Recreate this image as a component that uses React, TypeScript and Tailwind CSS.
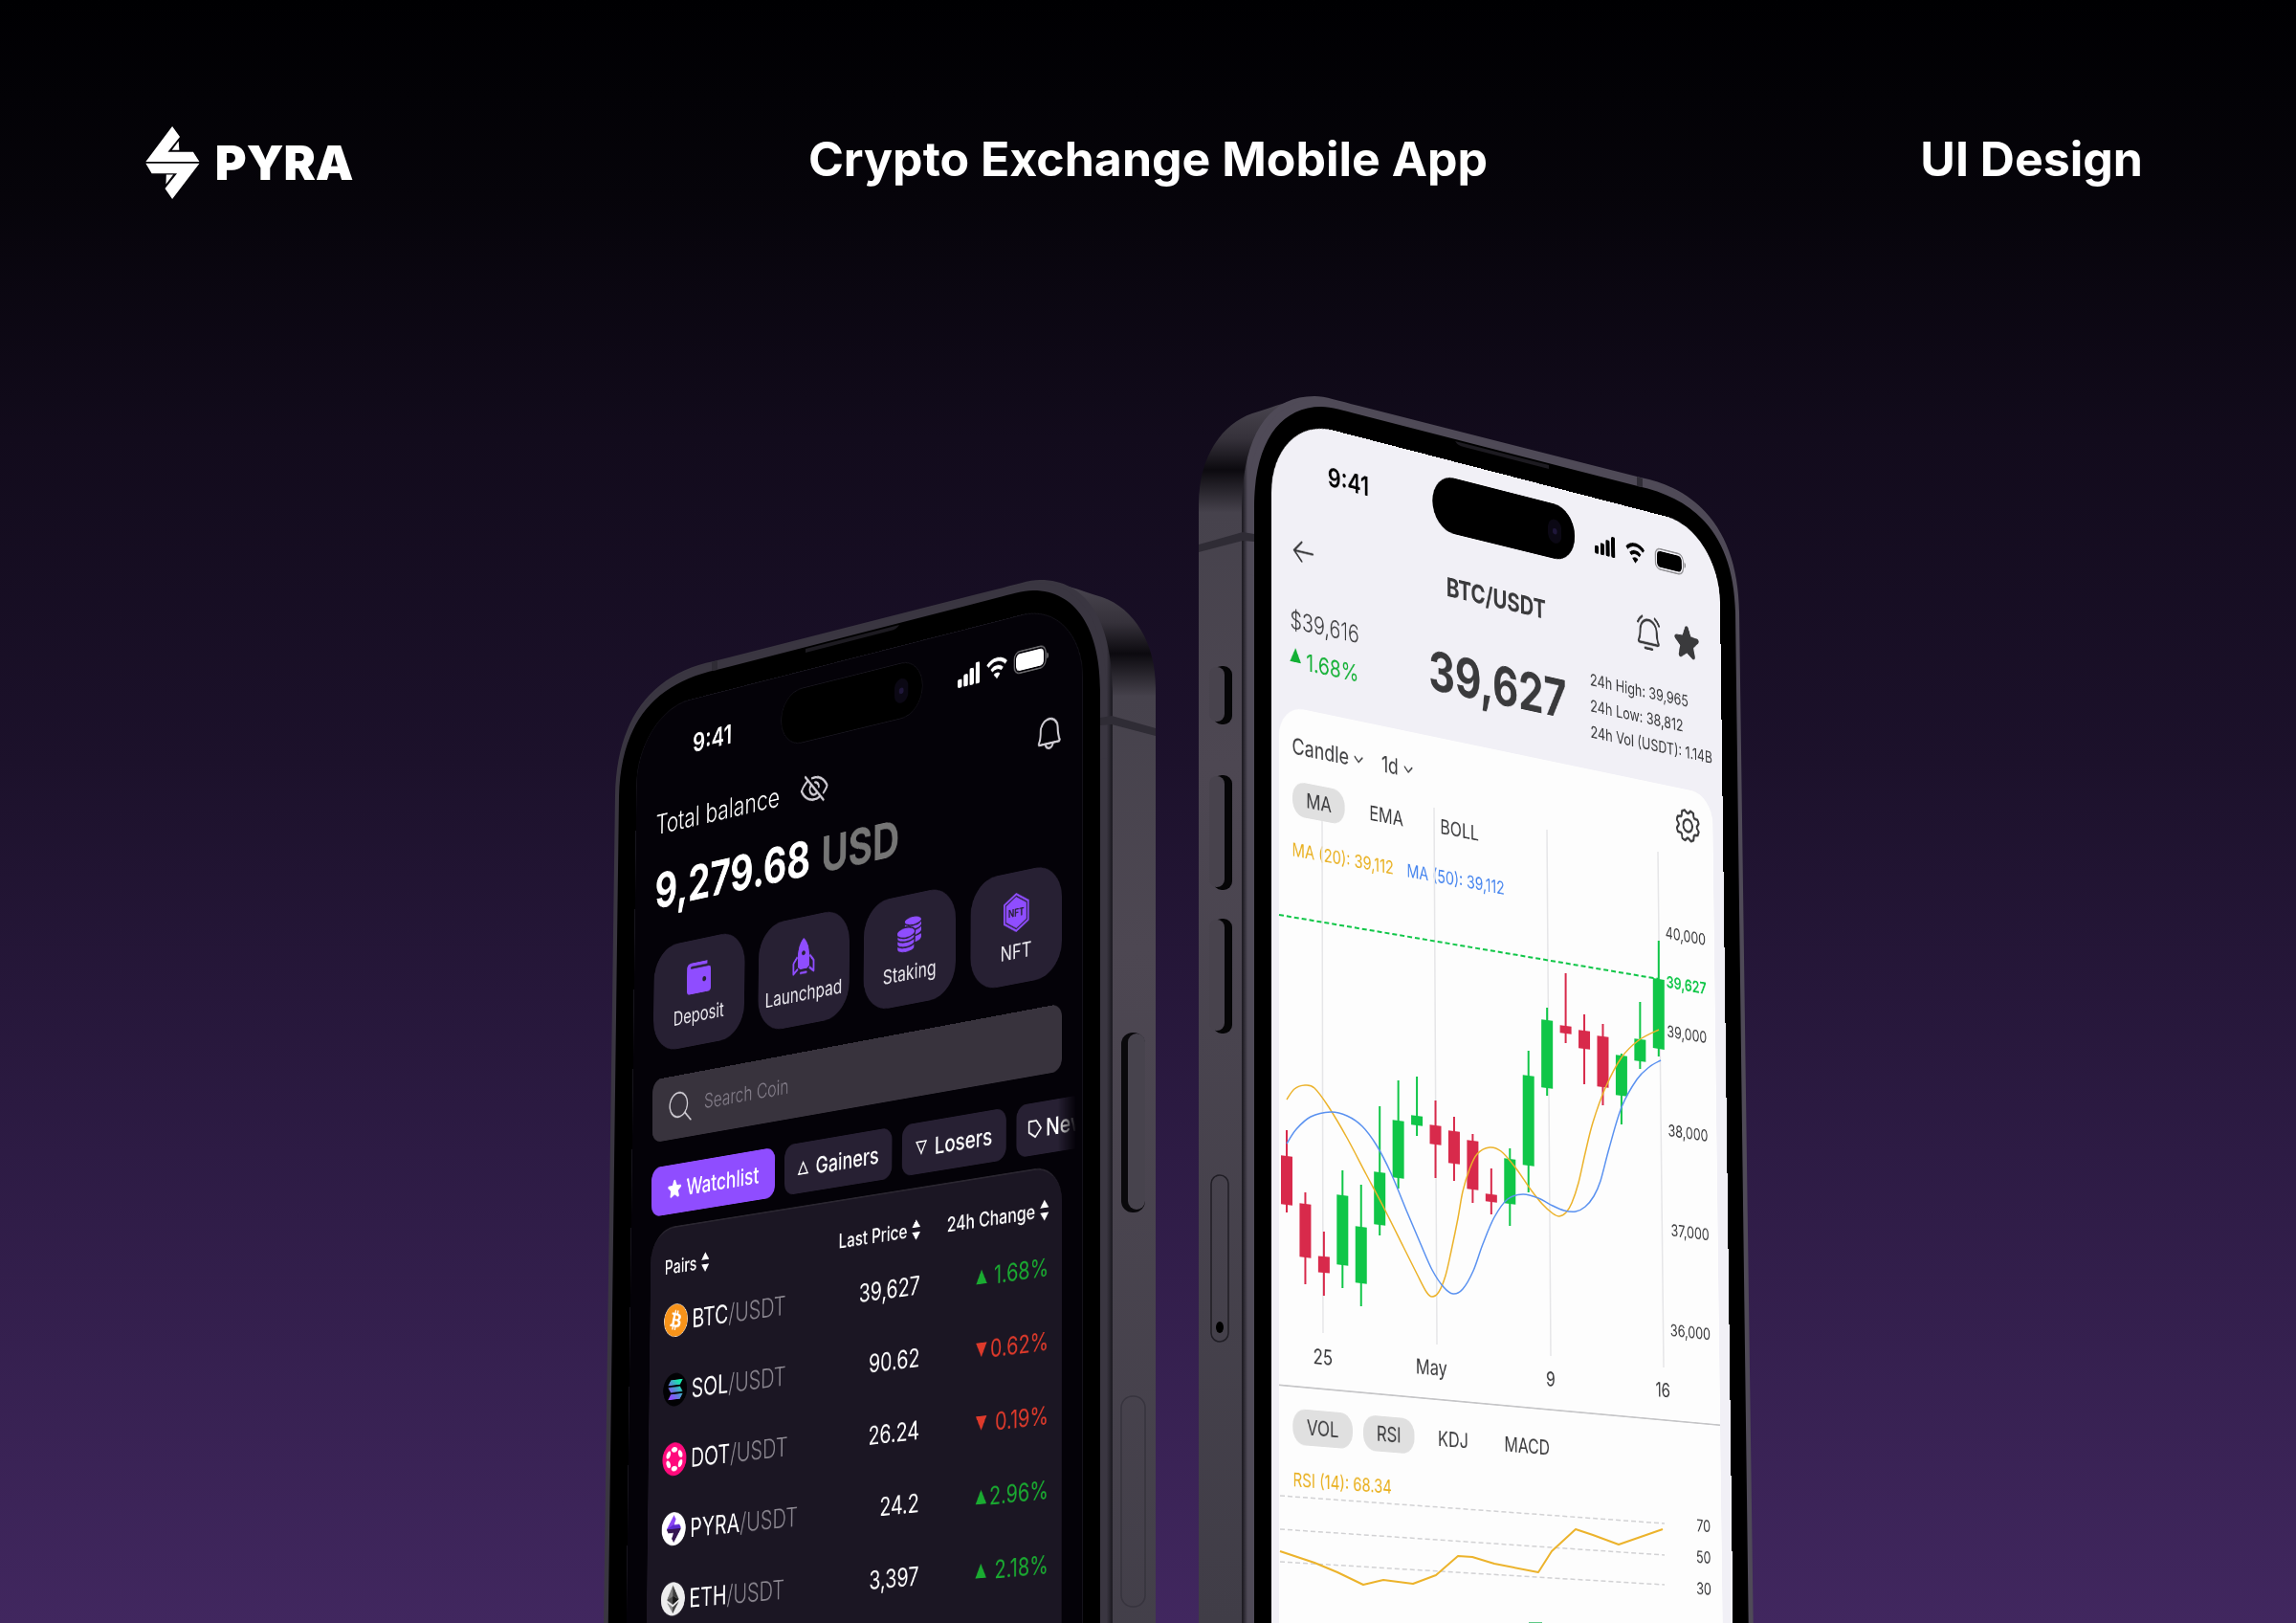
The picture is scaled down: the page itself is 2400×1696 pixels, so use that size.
import { useId, type ReactNode } from "react";
import {
  PiArrowLeft,
  PiBell,
  PiBellSimpleRinging,
  PiCaretDownBold,
  PiEyeSlash,
  PiGear,
  PiMagnifyingGlassLight,
  PiStarFill,
} from "react-icons/pi";
import { FaBitcoin } from "react-icons/fa6";

type Point = [number, number];

const STAGE_X = 560;
const STAGE_Y = 380;
const SCREEN_W = 786;
const SCREEN_H = 1704;

/** matrix3d that lays a flat SCREEN_W x SCREEN_H screen onto four stage points (clockwise from top left). */
function projectOnto(corners: Point[]) {
  const [[x0, y0], [x1, y1], [x2, y2], [x3, y3]] = corners.map(([x, y]) => [x - STAGE_X, y - STAGE_Y]);
  const dx1 = x1 - x2, dx2 = x3 - x2, dx3 = x0 - x1 + x2 - x3;
  const dy1 = y1 - y2, dy2 = y3 - y2, dy3 = y0 - y1 + y2 - y3;
  const det = dx1 * dy2 - dx2 * dy1;
  const g = (dx3 * dy2 - dx2 * dy3) / det;
  const h = (dx1 * dy3 - dx3 * dy1) / det;
  const a = x1 - x0 + g * x1, b = x3 - x0 + h * x3;
  const d = y1 - y0 + g * y1, e = y3 - y0 + h * y3;
  const m = [
    a / SCREEN_W, d / SCREEN_W, 0, g / SCREEN_W,
    b / SCREEN_H, e / SCREEN_H, 0, h / SCREEN_H,
    0, 0, 1, 0,
    x0, y0, 0, 1,
  ];
  return `matrix3d(${m.join(",")})`;
}

const LIGHT_CORNERS: Point[] = [[1329, 433], [1797, 554], [1814, 1882], [1329, 1872]];
const DARK_CORNERS: Point[] = [[666, 745], [1132, 626], [1132, 2064], [650, 2074]];

/* ---------- icons ---------- */

function PyraMark({ className }: { className?: string }) {
  return (
    <svg viewBox="36 35 172 230" className={className} fill="currentColor" aria-hidden="true">
      <path d="M121 35 145 68 107 116H187L207 147H37ZM141 82 143 110H120Z" />
      <path d="M37 152H207L121 265 98 232 136 184H56ZM102 188H124L101 218Z" />
    </svg>
  );
}

function StatusIcons({ className }: { className: string }) {
  return (
    <div className={className}>
      <svg viewBox="0 0 38 28" className="w-[38px]" fill="currentColor" aria-hidden="true">
        <rect x="0" y="17" width="7" height="11" rx="2" />
        <rect x="10" y="12" width="7" height="16" rx="2" />
        <rect x="20" y="6" width="7" height="22" rx="2" />
        <rect x="30" y="0" width="7" height="28" rx="2" />
      </svg>
      <svg viewBox="0 0 36 28" className="w-9" fill="none" stroke="currentColor" strokeWidth="5" aria-hidden="true">
        <path d="M2.500 9.500a22 22 0 0 1 31 0" />
        <path d="M9 16.500a13 13 0 0 1 18 0" />
        <path d="M18 28l-5.500-6a8.500 8.500 0 0 1 11 0z" fill="currentColor" stroke="none" />
      </svg>
      <svg viewBox="0 0 58 30" className="w-[58px]" aria-hidden="true">
        <rect x="1" y="1" width="52" height="28" rx="9" fill="none" stroke="currentColor" strokeOpacity=".4" strokeWidth="2" />
        <rect x="4" y="4" width="46" height="22" rx="6" fill="currentColor" />
        <path d="M55 11q3 1 3 4t-3 4z" fill="currentColor" fillOpacity=".4" />
      </svg>
    </div>
  );
}

function WalletIcon() {
  return (
    <svg viewBox="0 0 40 40" className="size-11" aria-hidden="true">
      <path fill="#8f4dff" d="M7 1H34V5H8q-2 0-2 1.500T8 8H36q4 0 4 4V35q0 4-4 4H4q-4 0-4-4V7Q0 1 7 1Z" />
      <circle cx="29" cy="23" r="3" fill="#272033" />
    </svg>
  );
}

function RocketIcon() {
  return (
    <svg viewBox="0 0 40 48" className="h-12" aria-hidden="true">
      <path fill="#8f4dff" fillRule="evenodd" d="M20 0c7 6 10 14 10 22v16l-4 3H14l-4-3V22C10 14 13 6 20 0Zm0 17a3 3 0 1 0 0 6 3 3 0 0 0 0-6Z" />
      <path fill="none" stroke="#8f4dff" strokeWidth="3" strokeLinejoin="round" d="M9 24 2 32V46L10 40M31 24 38 32V46L30 40" />
      <path stroke="#8f4dff" strokeWidth="3" strokeLinecap="round" d="M15 46H25" />
    </svg>
  );
}

function CoinsIcon() {
  return (
    <svg viewBox="0 0 44 48" className="h-12" fill="#8f4dff" stroke="#272033" strokeWidth="2" aria-hidden="true">
      <path d="M15 25v5c0 4 6 6 14 6s14-2 14-6v-5z" />
      <path d="M13 15v6c0 4 7 6 15 6s15-2 15-6v-6z" />
      <path d="M13 7v6c0 4 7 6 15 6s15-2 15-6V7z" />
      <ellipse cx="28" cy="7" rx="15" ry="6" />
      <path d="M1 36v5c0 4 7 6 15 6s15-2 15-6v-5z" />
      <path d="M1 29v5c0 4 7 6 15 6s15-2 15-6v-5z" />
      <path d="M1 21v6c0 4 7 6 15 6s15-2 15-6v-6z" />
      <ellipse cx="16" cy="21" rx="16" ry="7" />
    </svg>
  );
}

function NftIcon() {
  return (
    <svg viewBox="0 0 44 50" className="h-[50px]" aria-hidden="true">
      <path fill="#8f4dff" d="M22 0 43 12V38L22 50 1 38V12Z" />
      <path fill="none" stroke="#272033" strokeWidth="1.500" d="M22 4 39.500 14V36L22 46 4.500 36V14Z" />
      <text x="22" y="30" textAnchor="middle" fontSize="13" fontWeight="700" fill="#272033" fontFamily="Inter, sans-serif">NFT</text>
    </svg>
  );
}

function SolIcon() {
  const id = useId();
  return (
    <svg viewBox="0 0 44 44" className="size-11" aria-hidden="true">
      <linearGradient id={id} x1="1" y1="0" x2="0" y2="1">
        <stop offset="0.200" stopColor="#19e6ad" />
        <stop offset="0.550" stopColor="#5a86d8" />
        <stop offset="0.850" stopColor="#8f4dff" />
      </linearGradient>
      <circle cx="22" cy="22" r="22" fill="#020204" />
      <path fill={`url(#${id})`} d="M14 9H36L31 16H9ZM9 18.500H31L36 25.500H14ZM14 28H36L31 35H9Z" />
    </svg>
  );
}

function DotIcon() {
  return (
    <svg viewBox="0 0 44 44" className="size-11" aria-hidden="true">
      <circle cx="22" cy="22" r="22" fill="#ff0a7c" />
      <g fill="#fff">
        {[0, 60, 120, 180, 240, 300].map((angle) => (
          <ellipse key={angle} cx="22" cy="9.500" rx="5.500" ry="3.500" transform={`rotate(${angle} 22 22)`} />
        ))}
      </g>
    </svg>
  );
}

function EthIcon() {
  return (
    <svg viewBox="0 0 44 44" className="size-11" aria-hidden="true">
      <circle cx="22" cy="22" r="22" fill="#ededee" />
      <path fill="#7d7d7d" d="M22 4 11 23 22 18Z" />
      <path fill="#3c3c3c" d="M22 4 33 23 22 18Z" />
      <path fill="#4f4f4f" d="M22 18 11 23 22 29.500Z" />
      <path fill="#161616" d="M22 18 33 23 22 29.500Z" />
      <path fill="#8c8c8c" d="M11 26 22 32.500V41Z" />
      <path fill="#454545" d="M33 26 22 32.500V41Z" />
    </svg>
  );
}

function BtcIcon() {
  return (
    <span className="block size-11 rounded-full bg-white">
      <FaBitcoin className="size-11 text-[#f7931a]" aria-hidden="true" />
    </span>
  );
}

function PyraCoinIcon() {
  return (
    <span className="flex size-11 items-center justify-center rounded-full bg-white">
      <svg viewBox="36 35 172 230" className="h-9" aria-hidden="true">
        <path fill="#8a45f5" d="M121 35 145 68 125 116H187L207 150H37Z" />
        <path fill="#5b2bd0" d="M110 116H187L207 150H37Z" />
        <path fill="#351552" d="M37 150H207L121 265 98 232 118 184H56Z" />
      </svg>
    </span>
  );
}

function SortIcon() {
  return (
    <svg viewBox="0 0 14 26" className="h-[26px]" fill="currentColor" aria-hidden="true">
      <path d="M7 0 14 10H0ZM7 26 0 16H14Z" />
    </svg>
  );
}

function Trend({ up, className }: { up: boolean; className?: string }) {
  return (
    <svg viewBox="0 0 18 18" className={className} fill="currentColor" aria-hidden="true">
      {up ? <path d="M9 0 18 18H0Z" /> : <path d="M0 0H18L9 18Z" />}
    </svg>
  );
}

/* ---------- device body ---------- */

function Chassis({ dark = false }: { dark?: boolean }) {
  const id = useId();
  const frame = dark ? "#3a3641" : "#4f4a57";
  return (
    <g>
      <defs>
        <linearGradient id={`${id}side`} x1="0" y1="414" x2="0" y2="1696" gradientUnits="userSpaceOnUse">
          <stop offset="0" stopColor="#4c4852" />
          <stop offset="0.035" stopColor="#35313a" />
          <stop offset="0.060" stopColor="#0c0a0f" />
          <stop offset="0.095" stopColor="#46424c" />
          <stop offset="0.300" stopColor="#4d4752" />
          <stop offset="1" stopColor="#403d47" />
        </linearGradient>
        <linearGradient id={`${id}edge`} x1="1294" y1="0" x2="1311" y2="0" gradientUnits="userSpaceOnUse">
          <stop offset="0" stopColor="#1b191f" />
          <stop offset="0.300" stopColor="#1f1d24" />
          <stop offset="0.600" stopColor={frame} />
          <stop offset="1" stopColor={frame} />
        </linearGradient>
      </defs>
      <path
        fill={`url(#${id}side)`}
        d="M1374 416C1350 416 1334 425 1309 432C1275 444 1253 480 1253 527V1720H1330V500Z"
      />
      <path
        fill={`url(#${id}edge)`}
        d="M1298 1720V530C1299 456 1325 414 1374 414C1385 414 1400 419 1420 424L1715 499C1780 512 1817 560 1818 640L1833 1720Z"
      />
      <path
        fill={frame}
        d="M1304 600V530C1305 462 1330 418 1376 417C1386 417 1400 421 1420 426L1715 501C1778 514 1814 562 1815 640V700Z"
      />
      <path
        fill="#000"
        d="M1311 1720V530C1311 464 1337 425 1381 425C1392 425 1404 429 1420 433L1712 508C1776 522 1812 562 1814 640L1828 1720Z"
      />
      <path fill="#2f2c35" d="M1253 569 1299 556 1311 558V566L1299 565 1253 577Z" />
      <path fill="#2f2c35" d="M1711 498 1717 500V509L1711 508Z" />
      <path fill="#1d1b21" d="M1521 461 1619 486V490L1530 467Q1524 466 1521 461Z" />
      {dark ? (
        <g>
          <rect x="1264" y="887" width="25" height="188" rx="12" fill="#0a090c" />
          <rect x="1264" y="888" width="18" height="184" rx="9" fill="#47434d" />
          <rect x="1264" y="1267" width="25" height="220" rx="12" fill="none" stroke="#37343e" strokeWidth="1.500" />
        </g>
      ) : (
        <g>
          {[[696, 61], [810, 120], [960, 120]].map(([y, h]) => (
            <g key={y}>
              <rect x="1268" y={y} width="20" height={h} rx="9" fill="#050506" />
              <rect x="1264" y={y + 1} width="16" height={h - 4} rx="8" fill="#48434d" />
            </g>
          ))}
          <rect x="1266" y="1228" width="18" height="174" rx="9" fill="none" stroke="#201e25" strokeWidth="1.500" />
          <ellipse cx="1275" cy="1387" rx="4" ry="6" fill="#000" />
        </g>
      )}
    </g>
  );
}

function DynamicIsland({ outlined = false }: { outlined?: boolean }) {
  return (
    <div
      className={
        outlined
          ? "absolute inset-x-0 top-[22px] mx-auto flex h-[74px] w-[250px] items-center justify-end rounded-full border border-[#17151d] bg-black pr-6"
          : "absolute inset-x-0 top-[22px] mx-auto flex h-[74px] w-[250px] items-center justify-end rounded-full bg-black pr-6"
      }
    >
      <span className="flex h-8 w-6 items-center justify-center rounded-full bg-[#0b0814]">
        <span className="size-2 rounded-full bg-[#1f173a]" />
      </span>
    </div>
  );
}

/* ---------- light screen: trading pair ---------- */

// Wick top, body top, body bottom, wick bottom as seen along each candle's centre line.
const CANDLES: [boolean, number, number, number, number][] = [
  [false, 1181, 1208, 1259, 1267],
  [false, 1246, 1258, 1314, 1342],
  [false, 1287, 1313, 1330, 1354],
  [true, 1223, 1249, 1322, 1346],
  [true, 1238, 1282, 1341, 1365],
  [true, 1156, 1225, 1280, 1291],
  [true, 1129, 1171, 1231, 1242],
  [true, 1125, 1166, 1176, 1187],
  [false, 1150, 1176, 1196, 1231],
  [false, 1167, 1182, 1216, 1234],
  [false, 1185, 1192, 1243, 1257],
  [false, 1221, 1248, 1256, 1269],
  [true, 1200, 1211, 1258, 1281],
  [true, 1098, 1124, 1218, 1246],
  [true, 1053, 1066, 1137, 1145],
  [false, 1017, 1072, 1080, 1090],
  [false, 1060, 1077, 1096, 1133],
  [false, 1070, 1083, 1136, 1155],
  [true, 1101, 1103, 1145, 1175],
  [true, 1047, 1086, 1109, 1117],
  [true, 983, 1023, 1096, 1104],
];

const MA20: Point[] = [
  [1345, 1149], [1353, 1138], [1364, 1134], [1374, 1137], [1389, 1157], [1408, 1189], [1428, 1227], [1447, 1263],
  [1467, 1303], [1481, 1331], [1491, 1350], [1497, 1355], [1504, 1350], [1511, 1333], [1517, 1307], [1524, 1273],
  [1529, 1245], [1536, 1222], [1544, 1206], [1557, 1199], [1569, 1203], [1584, 1220], [1600, 1243], [1612, 1258],
  [1623, 1268], [1630, 1271], [1637, 1267], [1643, 1257], [1650, 1236], [1657, 1205], [1665, 1173], [1678, 1137],
  [1695, 1105], [1713, 1087], [1734, 1076],
];

const MA50: Point[] = [
  [1345, 1195], [1355, 1180], [1370, 1167], [1391, 1162], [1408, 1166], [1424, 1177], [1439, 1197], [1454, 1226],
  [1471, 1267], [1485, 1300], [1497, 1327], [1509, 1345], [1519, 1352], [1529, 1347], [1540, 1328], [1550, 1300],
  [1562, 1272], [1576, 1253], [1592, 1248], [1608, 1252], [1623, 1260], [1635, 1265], [1647, 1266], [1657, 1261],
  [1666, 1250], [1673, 1234], [1682, 1200], [1695, 1157], [1711, 1128], [1724, 1115], [1736, 1108],
];

const RSI: Point[] = [
  [1338, 1621], [1374, 1633], [1398, 1643], [1425, 1656], [1446, 1651], [1477, 1655], [1501, 1646], [1524, 1626],
  [1539, 1627], [1562, 1634], [1608, 1643], [1622, 1621], [1647, 1598], [1665, 1604], [1692, 1614], [1738, 1598],
];

/** Catmull-Rom spline through the points, written as cubic segments. */
function smooth(points: Point[]) {
  let d = `M${points[0].join(" ")}`;
  for (let i = 0; i < points.length - 1; i++) {
    const p0 = points[Math.max(i - 1, 0)];
    const p1 = points[i];
    const p2 = points[i + 1];
    const p3 = points[Math.min(i + 2, points.length - 1)];
    d += `C${p1[0] + (p2[0] - p0[0]) / 6} ${p1[1] + (p2[1] - p0[1]) / 6} ${p2[0] - (p3[0] - p1[0]) / 6} ${p2[1] - (p3[1] - p1[1]) / 6} ${p2[0]} ${p2[1]}`;
  }
  return d;
}

function ChartLayer() {
  return (
    <svg viewBox="560 380 1280 1316" className="pointer-events-none absolute inset-0 size-full" fill="none" role="img" aria-label="BTC/USDT price and RSI chart">
      <g stroke="#e6e6e8" strokeWidth="1.500">
        <path d="M1382 858 1383 1393M1499 844 1502 1405M1617 867 1621 1417M1733 890 1739 1429" />
      </g>
      <path d="M1337 956 1734 1023" stroke="#10c648" strokeWidth="2" strokeDasharray="5 3" />
      {CANDLES.map(([up, high, top, bottom, low], i) => {
        const x = 1345 + i * 19.44;
        const tilt = 6 * ((1950 - top) / 1000) * 0.16;
        const color = up ? "#10c648" : "#d82a4b";
        return (
          <g key={i} fill={color}>
            <path d={`M${x - 1} ${high}H${x + 1}V${low}H${x - 1}Z`} />
            <path
              d={`M${x - 6} ${top - tilt}L${x + 6} ${top + tilt}V${bottom + tilt}L${x - 6} ${bottom - tilt}Z`}
            />
          </g>
        );
      })}
      <path d={smooth(MA20)} stroke="#ecb32c" strokeWidth="1.500" />
      <path d={smooth(MA50)} stroke="#5b92f0" strokeWidth="1.500" />
      <g stroke="#d2d2d4" strokeWidth="1.500" strokeDasharray="5 3">
        <path d="M1338 1563 1740 1592M1338 1598 1740 1625M1338 1632 1740 1656" />
      </g>
      <path d={`M${RSI.map((p) => p.join(" ")).join("L")}`} stroke="#ecb32c" strokeWidth="2" strokeLinejoin="round" />
      <path d="M1598 1695H1612V1698H1598Z" fill="#5fc987" />
    </svg>
  );
}

function Pill({ active = false, children }: { active?: boolean; children: ReactNode }) {
  return (
    <button
      type="button"
      aria-pressed={active}
      className={
        active
          ? "h-11 rounded-[20px] bg-[#e0e0e0] px-[22px] text-[26px] leading-11 text-[#3c3c3e]"
          : "h-11 rounded-[20px] px-[22px] text-[26px] leading-11 text-[#3c3c3e]"
      }
    >
      {children}
    </button>
  );
}

function PairScreen() {
  return (
    <section
      aria-label="BTC/USDT"
      className="absolute top-0 left-0 h-[1704px] w-[786px] origin-top-left overflow-hidden rounded-[100px] bg-[#f1f0f6] text-[#3a3a3c]"
      style={{ transform: projectOnto(LIGHT_CORNERS) }}
    >
      <div className="relative flex h-[118px] items-center justify-between pt-1 pr-[64px] pl-[92px] text-black">
        <time className="text-[34px] font-semibold">9:41</time>
        <DynamicIsland />
        <StatusIcons className="flex items-center gap-[18px]" />
      </div>

      <header className="grid h-[98px] grid-cols-[254px_188px_1fr] items-center pr-[38px] pl-[30px]">
        <button type="button" aria-label="Back">
          <PiArrowLeft className="size-11" />
        </button>
        <h2 className="text-center text-[34px] font-bold">BTC/USDT</h2>
        <div className="flex items-center justify-end gap-[18px]">
          <button type="button" aria-label="Price alert">
            <PiBellSimpleRinging className="size-[54px]" />
          </button>
          <button type="button" aria-label="Favourite">
            <PiStarFill className="size-[52px]" />
          </button>
        </div>
      </header>

      <div className="grid h-[152px] grid-cols-[230px_283px_1fr] pl-[30px]">
        <div className="pt-4 text-[31px] leading-[50px] font-light">
          <p>$39,616</p>
          <p className="flex items-center gap-2 font-normal text-[#13b035]">
            <Trend up className="-mt-3 size-[18px]" />
            <span className="text-[30px]">1.68%</span>
          </p>
        </div>
        <p className="pt-6 text-[70px] leading-[84px] font-bold">39,627</p>
        <ul className="pt-3.5 text-[22px] leading-[35px] whitespace-nowrap">
          <li>24h High: 39,965</li>
          <li>24h Low: 38,812</li>
          <li>24h Vol (USDT): 1.14B</li>
        </ul>
      </div>

      <div className="mr-[19px] ml-3 h-[1400px] rounded-t-[40px] bg-[#fdfdfd] pt-5">
        <div className="flex h-[58px] items-center pr-5 pl-[21px] text-[28px]">
          <button type="button" className="flex items-center gap-1.5">
            Candle <PiCaretDownBold className="size-5" />
          </button>
          <button type="button" className="ml-7 flex items-center gap-1.5">
            1d <PiCaretDownBold className="size-5" />
          </button>
          <button type="button" aria-label="Chart settings" className="ml-auto">
            <PiGear className="size-[54px]" />
          </button>
        </div>

        <div className="mt-[15px] flex gap-[18px] pl-[22px]">
          <Pill active>MA</Pill>
          <Pill>EMA</Pill>
          <Pill>BOLL</Pill>
        </div>

        <div className="mt-[26px] flex justify-between pr-4 pl-[21px]">
          <p className="flex gap-[22px] text-[23px] leading-[34px]">
            <span className="text-[#e9b020]">MA (20): 39,112</span>
            <span className="text-[#4584ee]">MA (50): 39,112</span>
          </p>
          <ol className="pt-[3px] text-right text-[22px] leading-[66px]">
            <li className="h-[66px]">40,000</li>
            <li className="h-[66px] font-semibold text-[#10c648]">39,627</li>
            <li className="h-[132px]">39,000</li>
            <li className="h-[132px]">38,000</li>
            <li className="h-[132px]">37,000</li>
            <li className="h-[66px]">36,000</li>
          </ol>
        </div>

        <ol className="mt-[29px] mb-5 grid grid-cols-[140px_216px_190px_209px] text-center text-[26px] leading-9">
          <li>25</li>
          <li>May</li>
          <li>9</li>
          <li>16</li>
        </ol>
        <hr className="border-t-2 border-[#c6c6c8]" />

        <div className="mt-[26px] flex gap-[17px] pl-[22px]">
          <Pill active>VOL</Pill>
          <Pill active>RSI</Pill>
          <Pill>KDJ</Pill>
          <Pill>MACD</Pill>
        </div>

        <div className="mt-[26px] flex justify-between pr-5 pl-[22px]">
          <p className="text-[23px] leading-[34px] text-[#e9b020]">RSI (14): 68.34</p>
          <ol className="pt-[17px] text-right text-[22px] leading-[41px]">
            <li>70</li>
            <li>50</li>
            <li>30</li>
          </ol>
        </div>
      </div>
    </section>
  );
}

/* ---------- dark screen: wallet ---------- */

const ACTIONS = [
  { label: "Deposit", icon: <WalletIcon /> },
  { label: "Launchpad", icon: <RocketIcon /> },
  { label: "Staking", icon: <CoinsIcon /> },
  { label: "NFT", icon: <NftIcon /> },
];

const PAIRS = [
  { coin: "BTC", icon: <BtcIcon />, price: "39,627", change: "1.68%", up: true },
  { coin: "SOL", icon: <SolIcon />, price: "90.62", change: "0.62%", up: false },
  { coin: "DOT", icon: <DotIcon />, price: "26.24", change: "0.19%", up: false },
  { coin: "PYRA", icon: <PyraCoinIcon />, price: "24.2", change: "2.96%", up: true },
  { coin: "ETH", icon: <EthIcon />, price: "3,397", change: "2.18%", up: true },
];

const CHIP = "flex h-[66px] shrink-0 items-center gap-3 rounded-2xl bg-[#272033] px-[23px] text-[30px] font-medium";

function WalletScreen() {
  return (
    <section
      aria-label="Wallet"
      className="absolute top-0 left-0 h-[1704px] w-[786px] origin-top-left overflow-hidden rounded-[100px] border border-[#17151d] bg-[#040208] text-white"
      style={{ transform: projectOnto(DARK_CORNERS) }}
    >
      <div className="relative flex h-[118px] items-center justify-between pt-0.5 pr-[55px] pl-[105px]">
        <time className="text-[36px] font-semibold">9:41</time>
        <DynamicIsland outlined />
        <StatusIcons className="flex items-center gap-2.5" />
      </div>

      <div className="pr-[33px] pl-[37px]">
        <div className="flex h-[86px] items-center">
          <h2 className="text-[37px] font-light">Total balance</h2>
          <button type="button" aria-label="Hide balance" className="ml-9">
            <PiEyeSlash className="size-[52px] text-[#d0cdd4]" />
          </button>
          <button type="button" aria-label="Notifications" className="-mr-1 ml-auto">
            <PiBell className="size-[50px] text-[#d0cdd4]" />
          </button>
        </div>

        <p className="mt-2 text-[65px] leading-[80px] font-bold">
          9,279.68 <span className="ml-1 text-[#757575]">USD</span>
        </p>

        <div className="mt-[37px] grid grid-cols-[168fr_163fr_158fr_151fr] gap-[25px]">
          {ACTIONS.map(({ label, icon }) => (
            <button
              type="button"
              key={label}
              className="flex h-[143px] flex-col items-center rounded-[44px] bg-[#272033] pt-[26px] text-[26px] leading-8 text-[#eceaf0]"
            >
              <span className="flex h-[52px] items-center">{icon}</span>
              <span className="mt-2">{label}</span>
            </button>
          ))}
        </div>

        <div className="mt-9 flex h-[85px] items-center gap-[18px] rounded-2xl bg-[#38333d] px-[26px]">
          <PiMagnifyingGlassLight className="size-[52px] shrink-0 text-[#d0cdd4]" aria-hidden="true" />
          <input
            type="search"
            aria-label="Search Coin"
            placeholder="Search Coin"
            className="w-full bg-transparent text-[27px] font-light outline-none placeholder:text-[#857f8b]"
          />
        </div>

        <div className="mt-[34px] -mr-[23px] flex gap-[17px] overflow-hidden [mask-image:linear-gradient(to_right,black_96%,transparent)]">
          <button type="button" aria-pressed="true" className="flex h-[66px] w-[226px] shrink-0 items-center justify-center gap-2 rounded-2xl bg-[#8f4dff] text-[30px] font-medium">
            <PiStarFill className="size-7" aria-hidden="true" />
            Watchlist
          </button>
          <button type="button" className={CHIP}>
            <svg viewBox="0 0 20 18" className="w-5" fill="none" stroke="currentColor" strokeWidth="2" aria-hidden="true">
              <path d="M10 2 18 17H2Z" />
            </svg>
            Gainers
          </button>
          <button type="button" className={CHIP}>
            <svg viewBox="0 0 20 18" className="w-5" fill="none" stroke="currentColor" strokeWidth="2" aria-hidden="true">
              <path d="M10 16 18 1H2Z" />
            </svg>
            Losers
          </button>
          <button type="button" className="flex h-[66px] shrink-0 items-center gap-1.5 rounded-2xl bg-[#272033] px-[18px] text-[30px] font-medium">
            <svg viewBox="0 0 26 26" className="w-6" fill="none" stroke="currentColor" strokeWidth="2.500" strokeLinejoin="round" aria-hidden="true">
              <path d="M3 2H16L24 13 14 24 3 17Z" />
            </svg>
            New
          </button>
        </div>

        <div className="mt-[17px] h-[1100px] rounded-t-[44px] border-t-2 border-[#2a2630] bg-[#1b1623] pt-[26px] pr-[21px] pl-[26px]">
          <table className="w-full table-fixed">
            <colgroup>
              <col className="w-[256px]" />
              <col className="w-[198px]" />
              <col />
            </colgroup>
            <thead className="text-[25px] leading-[52px] font-medium">
              <tr>
                {["Pairs", "Last Price", "24h Change"].map((title, i) => (
                  <th key={title} scope="col" className="p-0 font-medium whitespace-nowrap">
                    <button type="button" className={i === 0 ? "flex items-center gap-2" : "ml-auto flex items-center gap-2"}>
                      {title}
                      <SortIcon />
                    </button>
                  </th>
                ))}
              </tr>
            </thead>
            <tbody className="text-[32px]">
              {PAIRS.map(({ coin, icon, price, change, up }) => (
                <tr key={coin} className="h-[92px]">
                  <th scope="row" className="p-0 font-normal">
                    <span className="flex items-center gap-2 text-[34px] whitespace-nowrap">
                      {icon}
                      <span>
                        {coin}
                        <span className="font-light text-[#8b8790]">/USDT</span>
                      </span>
                    </span>
                  </th>
                  <td className="p-0 text-right">{price}</td>
                  <td className={up ? "p-0 text-[#1aab31]" : "p-0 text-[#de3a2b]"}>
                    <span className="flex items-center justify-between pl-[94px] text-[31px]">
                      <Trend up={up} className="size-[18px] shrink-0" />
                      {change}
                    </span>
                  </td>
                </tr>
              ))}
            </tbody>
          </table>
        </div>
      </div>
    </section>
  );
}

export default function App() {
  return (
    <main className="min-h-screen overflow-hidden bg-[linear-gradient(to_bottom,#000002_0%,#06040a_12%,#120b1c_27%,#1c112b_47%,#2d1b44_71%,#41275f_100%)] font-['Inter',sans-serif] text-white">
      <header className="grid h-[380px] grid-cols-[1fr_auto_1fr] items-start pt-[132px] pr-[160px] pl-[152px]">
        <a href="#home" className="flex items-center gap-4" aria-label="PYRA home">
          <PyraMark className="h-[76px]" />
          <span className="text-[50px] leading-[76px] font-black">PYRA</span>
        </a>
        <h1 className="pl-2 text-[50px] leading-[68px] font-bold">Crypto Exchange Mobile App</h1>
        <p className="text-right text-[50px] leading-[68px] font-bold">UI Design</p>
      </header>

      <div className="relative mx-auto h-[1316px] w-[1280px] overflow-hidden">
        <svg viewBox="560 380 1280 1316" className="absolute inset-0 size-full" aria-hidden="true">
          <Chassis />
          <g transform="translate(2461 192) scale(-1 1)">
            <Chassis dark />
          </g>
        </svg>
        <WalletScreen />
        <PairScreen />
        <ChartLayer />
      </div>
    </main>
  );
}
